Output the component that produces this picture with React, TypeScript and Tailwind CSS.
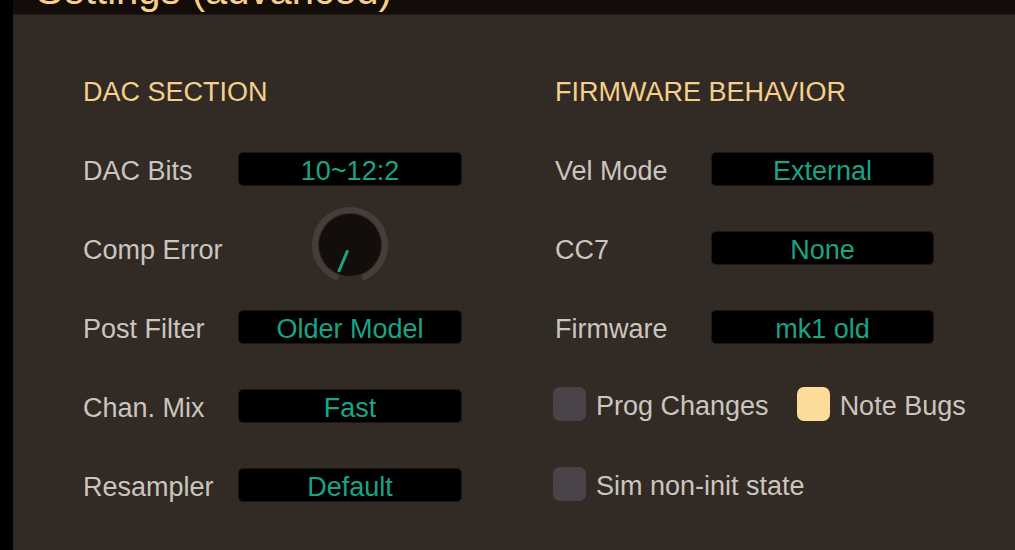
import React from 'react'

const dacRows = [
    {label: 'DAC Bits', value: '10~12:2'},
    {label: 'Comp Error', knob: true},
    {label: 'Post Filter', value: 'Older Model'},
    {label: 'Chan. Mix', value: 'Fast'},
    {label: 'Resampler', value: 'Default'},
]

const fwRows = [
    {label: 'Vel Mode', value: 'External'},
    {label: 'CC7', value: 'None'},
    {label: 'Firmware', value: 'mk1 old'},
]

function Knob() {
    return (
        <svg width="80" height="80" viewBox="0 0 80 80">
            <path d="M 28.03 72.89 A 35 35 0 1 1 51.97 72.89" fill="none" stroke="#463d38" strokeWidth="6"/>
            <circle cx="40" cy="40" r="31" fill="#130e0c"/>
            <line x1="37.27" y1="46.44" x2="29.06" y2="65.78" stroke="#1aa386" strokeWidth="3" strokeLinecap="round"/>
        </svg>
    )
}

function ValueBox({value, w}: {value: string, w: string}) {
    return (
        <div className={`${w} h-[34px] rounded-[5px] bg-black border border-[#1b1816] flex items-center justify-center text-[#1aa386]`}>
            <span className="pt-[4px] leading-[28px]">{value}</span>
        </div>
    )
}

function Check({on, label}: {on?: boolean, label: string}) {
    return (
        <div className="flex items-center gap-[10px]">
            <div className={`w-[33px] h-[34px] rounded-[7px] ${on ? 'bg-[#fcdc98]' : 'bg-[#4a444a]'}`}/>
            <span className="pt-[4px] leading-[28px]">{label}</span>
        </div>
    )
}

export default function App() {
    return (
        <div className="w-[1015px] h-[550px] overflow-hidden flex bg-black font-['Liberation_Sans',Arial,sans-serif] text-[27px] text-[#cbc5bf]">
            <div className="w-[13px] shrink-0 bg-black"/>
            <div className="flex-1 flex flex-col">

                {/*title bar*/}
                <div className="h-[15px] shrink-0 overflow-hidden bg-[#130c08] border-b border-[#201814]">
                    <div className="pl-[23px] -mt-[30px] text-[40px] leading-none text-[#f6d08a] whitespace-nowrap">Settings (advanced)</div>
                </div>

                <div className="flex-1 bg-[#322a25] pl-[70px] pt-[60px] flex">

                    {/*dac*/}
                    <div className="w-[472px] flex flex-col">
                        <div className="h-[30px] leading-[30px] pt-[2px] text-[#f6d08a] mb-[24px]">DAC SECTION</div>
                        {dacRows.map((r, i) => (
                            <div key={i} className="h-[79px] flex items-center">
                                <div className="w-[155px] pt-[4px] leading-[28px]">{r.label}</div>
                                {r.knob ? (
                                    <div className="w-[224px] flex justify-center -mt-[5px]"><Knob/></div>
                                ) : (
                                    <ValueBox w="w-[224px]" value={r.value as string}/>
                                )}
                            </div>
                        ))}
                    </div>

                    {/*firmware*/}
                    <div className="flex flex-col">
                        <div className="h-[30px] leading-[30px] pt-[2px] text-[#f6d08a] mb-[24px]">FIRMWARE BEHAVIOR</div>
                        {fwRows.map((r, i) => (
                            <div key={i} className="h-[79px] flex items-center">
                                <div className="w-[156px] pt-[4px] leading-[28px]">{r.label}</div>
                                <ValueBox w="w-[223px]" value={r.value}/>
                            </div>
                        ))}
                        <div className="h-[79px] flex items-center gap-[28px] -ml-[2px] -mt-[2px]">
                            <Check label="Prog Changes"/>
                            <Check on label="Note Bugs"/>
                        </div>
                        <div className="h-[79px] flex items-center -ml-[2px] mt-[1px]">
                            <Check label="Sim non-init state"/>
                        </div>
                    </div>
                </div>
            </div>
        </div>
    )
}
